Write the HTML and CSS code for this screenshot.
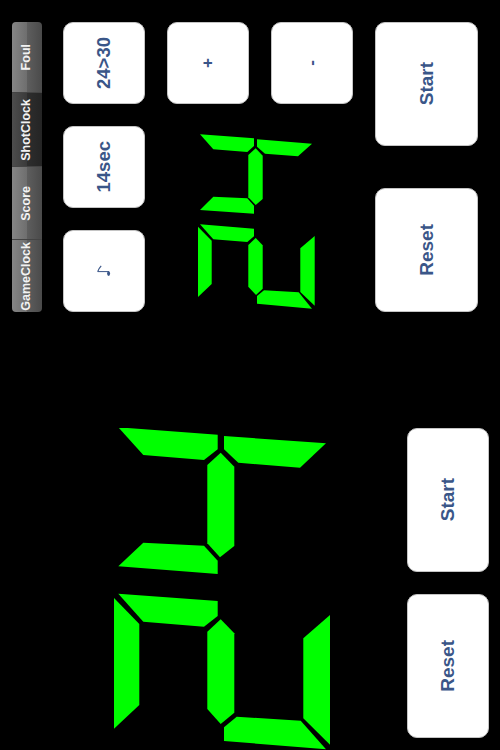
FILE: index.html
```html
<!DOCTYPE html>
<html lang="en">
<head>
<meta charset="utf-8">
<title>Shot Clock</title>
<link rel="stylesheet" href="styles.css">
</head>
<body>
<main class="screen">
  <section class="top">
    <div class="seg">
      <div class="seg-item"><span class="turned">Foul</span></div>
      <div class="seg-item selected"><span class="turned">ShotClock</span></div>
      <div class="seg-item"><span class="turned">Score</span></div>
      <div class="seg-item"><span class="turned">GameClock</span></div>
    </div>
    <div class="col small-col">
      <button class="btn small"><span class="turned lg">24&gt;30</span></button>
      <button class="btn small"><span class="turned lg">14sec</span></button>
      <button class="btn small" aria-label="Horn">
        <svg class="note-icon" viewBox="0 0 16 14" width="16" height="14">
          <path d="M1.7 7.6 C2.4 5.6 3.6 3.4 5.2 1.8" fill="none" stroke="#3a5688" stroke-width="1.2"/>
          <path d="M1.7 7.6 H13" fill="none" stroke="#3a5688" stroke-width="1"/>
          <ellipse cx="12.6" cy="9.6" rx="1.5" ry="2.3" fill="#3a5688"/>
        </svg>
      </button>
    </div>
    <div class="mid">
      <div class="mid-row">
        <button class="btn small"><span class="turned sm">+</span></button>
        <button class="btn small"><span class="turned sm">-</span></button>
      </div>
      <svg class="shot-display" viewBox="190 130 130 182" width="130" height="182" aria-label="Shot clock display">
        <g fill="#00ff00">
          <polygon points="200,134.3 254,138.3 254,146 247.3,152 213.3,149.3"/>
          <polygon points="257,139.3 312,143.7 298,156.3 265,153.7 257,146.7"/>
          <polygon points="255.7,148.3 262.7,155.7 262.7,199 255.7,205 248.3,197.3 248.3,155"/>
          <polygon points="213.3,196.7 247.3,198.3 254,205.7 254,213.7 200,210"/>
          <polygon points="200,224.3 254,228.7 254,236.3 247.3,242 213.3,239.3"/>
          <polygon points="198,226.7 211.7,240.7 211.7,284 198,297"/>
          <polygon points="255.7,238 262.7,245.3 262.7,288.7 256,295 248.3,286.7 248.3,245"/>
          <polygon points="257,296 264,290.3 298.7,292.3 312,308.7 257,303.7"/>
          <polygon points="314.7,236 314.7,305.7 300.3,292 300.3,248.3"/>
        </g>
      </svg>
    </div>
    <div class="col big-col">
      <button class="btn wide"><span class="turned xl">Start</span></button>
      <button class="btn wide"><span class="turned xl">Reset</span></button>
    </div>
  </section>
  <section class="bottom">
    <svg class="game-display" viewBox="110 428 222 322" width="222" height="322" aria-label="Game clock display">
      <g fill="#00ff00">
        <polygon points="118.3,427.3 217.7,434.7 217.7,449.3 204,460 143.3,455"/>
        <polygon points="224,436 326,443.3 300,467.7 238.3,462.7 224,449.3"/>
        <polygon points="220.7,452.7 234.3,466.7 234.3,546 220,557.3 207.3,543.3 207.3,465"/>
        <polygon points="143.3,542.7 204,545.7 217.7,560.7 217.7,574 118.3,566.3"/>
        <polygon points="118.3,593.7 217.7,601 217.7,616 204,626.7 143.3,621.7"/>
        <polygon points="114,598 139.3,624 139.3,705 114,728.7"/>
        <polygon points="220.7,619.3 234.3,633.3 234.3,712.7 220.7,724 207.3,709 207.3,631.7"/>
        <polygon points="224,727.3 236.7,716.7 300.7,720.7 326,749.3 224,741"/>
        <polygon points="330,615 330,744.7 303.3,718.3 303.3,638.3"/>
      </g>
    </svg>
    <div class="col low-col">
      <button class="btn tall"><span class="turned xl">Start</span></button>
      <button class="btn tall"><span class="turned xl">Reset</span></button>
    </div>
  </section>
</main>
</body>
</html>
```
FILE: styles.css
```css
* {
  box-sizing: border-box;
}

html,
body {
  margin: 0;
  padding: 0;
  background: #000;
}

.screen {
  width: 500px;
  height: 750px;
  overflow: hidden;
  background: #000;
  font-family: "Liberation Sans", Arial, sans-serif;
}

.top {
  display: flex;
  align-items: flex-start;
  padding: 22px 0 0 12px;
  height: 312px;
}

.turned {
  display: block;
  writing-mode: vertical-rl;
  transform: rotate(180deg);
  white-space: nowrap;
}

.seg {
  width: 30px;
  height: 290px;
  margin-right: 21px;
  display: flex;
  flex-direction: column;
  border-radius: 4px;
  overflow: hidden;
}

.seg-item {
  display: flex;
  align-items: center;
  justify-content: center;
  padding-right: 3px;
  color: #f2f2f2;
  font-size: 12.5px;
  font-weight: 700;
  height: 73px;
  border-bottom: 1px solid #444;
  background: linear-gradient(to right, #858585 0%, #6e6e6e 50%, #5e5e5e 50%, #4a4a4a 100%);
}

.seg-item:first-child {
  height: 71px;
}

.seg-item:last-child {
  height: 72px;
  border-bottom: 0;
}

.seg-item.selected {
  height: 74px;
  background: linear-gradient(to right, #4d4d4d 0%, #3a3a3a 50%, #2e2e2e 50%, #242424 100%);
}

.col {
  display: flex;
  flex-direction: column;
}

.small-col {
  gap: 22px;
  margin-right: 22px;
}

.mid {
  width: 186px;
  margin-right: 22px;
  display: flex;
  flex-direction: column;
}

.mid-row {
  display: flex;
  gap: 22px;
}

.shot-display {
  display: block;
  margin: 26px 0 0 23px;
}

.big-col {
  gap: 42px;
}

.btn {
  display: flex;
  align-items: center;
  justify-content: center;
  padding: 0;
  margin: 0;
  border: 1px solid #c4c4c4;
  border-radius: 10px;
  background: #fff;
  color: #3a5688;
  font-family: inherit;
  font-weight: 700;
}

.btn.small {
  width: 82px;
  height: 82px;
}

.btn.wide {
  width: 103px;
  height: 124px;
}

.btn.tall {
  width: 82px;
  height: 144px;
}

.lg {
  font-size: 18.5px;
}

.xl {
  font-size: 19px;
}

.sm {
  font-size: 17px;
}

.note-icon {
  display: block;
}

.bottom {
  display: flex;
  align-items: flex-start;
  padding: 116px 0 0 110px;
}

.game-display {
  display: block;
  flex: none;
  margin-right: 75px;
}

.low-col {
  gap: 22px;
}
```
